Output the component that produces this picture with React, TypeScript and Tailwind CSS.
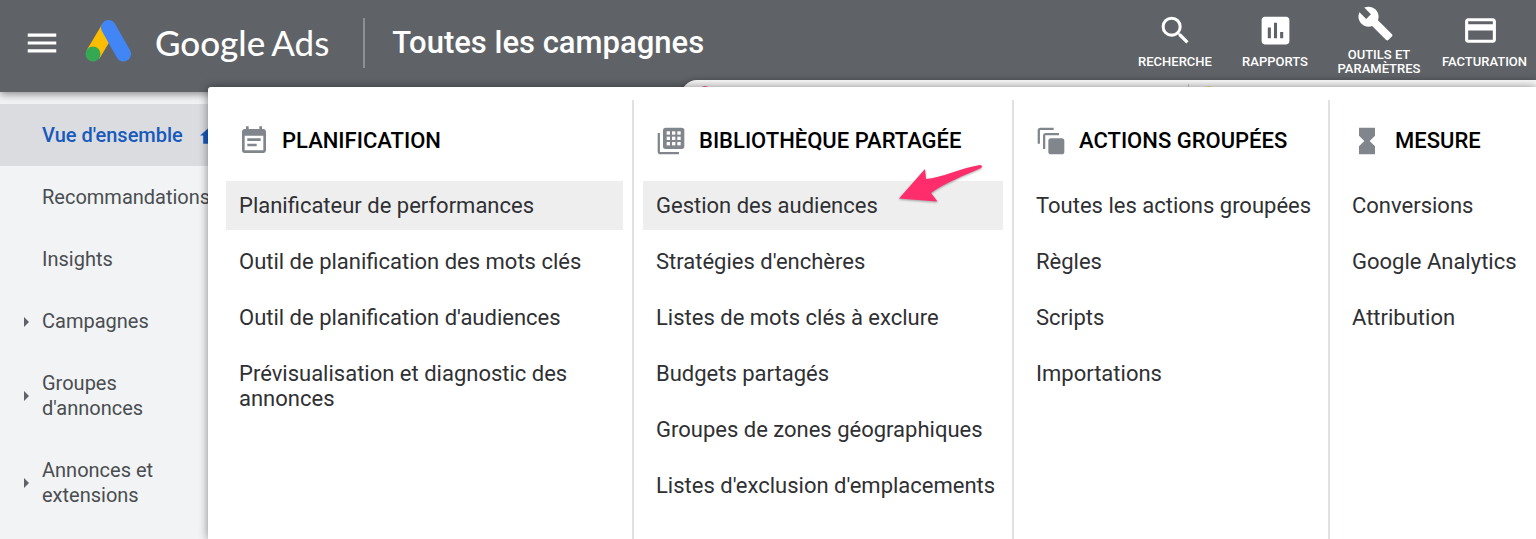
import { clsx } from "clsx";
import type { ReactNode } from "react";
import {
  MdAssessment,
  MdBuild,
  MdEventNote,
  MdHome,
  MdHourglassFull,
  MdMenu,
  MdOutlineCreditCard,
  MdSearch,
} from "react-icons/md";

type SideItem = {
  label: string;
  active?: boolean;
  expandable?: boolean;
};

type MenuItem = {
  label: string;
  highlighted?: boolean;
  pointed?: boolean;
};

type MenuColumn = {
  title: string;
  icon: ReactNode;
  items: MenuItem[];
};

const sideItems: SideItem[] = [
  { label: "Vue d'ensemble", active: true },
  { label: "Recommandations" },
  { label: "Insights" },
  { label: "Campagnes", expandable: true },
  { label: "Groupes d'annonces", expandable: true },
  { label: "Annonces et extensions", expandable: true },
];

const tools = [
  { label: "RECHERCHE", icon: <MdSearch size={37} />, width: "w-[100px]" },
  { label: "RAPPORTS", icon: <MdAssessment size={37} />, width: "w-[100px]" },
  {
    label: "OUTILS ET PARAMÈTRES",
    icon: <MdBuild size={37} className="mr-2" />,
    width: "w-[108px]",
  },
  {
    label: "FACTURATION",
    icon: <MdOutlineCreditCard size={37} className="mr-2" />,
    width: "w-[103px]",
  },
];

const columns: MenuColumn[] = [
  {
    title: "PLANIFICATION",
    icon: <MdEventNote size={32} />,
    items: [
      { label: "Planificateur de performances", highlighted: true },
      { label: "Outil de planification des mots clés" },
      { label: "Outil de planification d'audiences" },
      { label: "Prévisualisation et diagnostic des annonces" },
    ],
  },
  {
    title: "BIBLIOTHÈQUE PARTAGÉE",
    icon: <LibraryIcon />,
    items: [
      { label: "Gestion des audiences", highlighted: true, pointed: true },
      { label: "Stratégies d'enchères" },
      { label: "Listes de mots clés à exclure" },
      { label: "Budgets partagés" },
      { label: "Groupes de zones géographiques" },
      { label: "Listes d'exclusion d'emplacements" },
    ],
  },
  {
    title: "ACTIONS GROUPÉES",
    icon: <StackIcon />,
    items: [
      { label: "Toutes les actions groupées" },
      { label: "Règles" },
      { label: "Scripts" },
      { label: "Importations" },
    ],
  },
  {
    title: "MESURE",
    icon: <MdHourglassFull size={32} />,
    items: [
      { label: "Conversions" },
      { label: "Google Analytics" },
      { label: "Attribution" },
    ],
  },
];

// Offsets of the nine cells in the shared library icon
const cells = [8.75, 12.75, 16.75];

function LibraryIcon() {
  return (
    <svg width="32" height="32" viewBox="0 0 24 24" fill="currentColor" aria-hidden="true">
      <path d="M3.700 6H2v14c0 1.100.9 2 2 2h14v-1.700H3.700V6z" />
      <rect x="6" y="2" width="16" height="16" rx="2" />
      {cells.map((x) =>
        cells.map((y) => (
          <rect key={`${x}-${y}`} x={x} y={y - 4} width="2.500" height="2.500" fill="#fff" />
        )),
      )}
    </svg>
  );
}

function StackIcon() {
  return (
    <svg width="32" height="32" viewBox="0 0 24 24" fill="currentColor" aria-hidden="true">
      <path d="M2 14V4c0-1.100.9-2 2-2h10v1.700H3.700V14H2z" />
      <path d="M6 18V8c0-1.100.9-2 2-2h10v1.700H7.700V18H6z" />
      <rect x="10" y="10" width="12" height="12" rx="2" />
    </svg>
  );
}

function AdsLogo() {
  return (
    <svg width="46" height="46" viewBox="0 0 46 46" aria-hidden="true">
      <path d="M17 4.500 1.500 30.500l13 8L25 21z" fill="#fbbc04" />
      <path d="M23.500 7.500 38.500 34" stroke="#4285f4" strokeWidth="15" strokeLinecap="round" />
      <circle cx="8" cy="34" r="7.500" fill="#34a853" />
    </svg>
  );
}

function PointerArrow() {
  return (
    <svg
      className="absolute -top-4 left-64 drop-shadow-[0_1px_1px_rgba(0,0,0,0.35)]"
      width="84"
      height="38"
      viewBox="0 0 84 38"
      aria-hidden="true"
    >
      <path
        d="M0 33.500 26 4l1 10C42 13 62 3 81 0c2 0 2.500 2 1 3C66 10 46 18 32 28l6.500 8.500z"
        fill="#ff2d6b"
      />
    </svg>
  );
}

function Header() {
  return (
    <header className="relative z-10 flex h-[92px] items-start justify-between bg-[#5f6368] text-white shadow-[0_2px_8px_rgba(0,0,0,0.45)]">
      <div className="flex h-[85px] items-center pl-[23px]">
        <button type="button" aria-label="Menu principal">
          <MdMenu size={38} />
        </button>
        <a href="#accueil" className="ml-6 flex items-center gap-6">
          <AdsLogo />
          <span className="flex items-baseline gap-1.5 pb-0.5 font-['Lato',sans-serif] text-[35px] leading-[44px]">
            <span className="font-medium">Google</span>
            <span>Ads</span>
          </span>
        </a>
        <div className="ml-[34px] h-[50px] w-0.5 bg-[#8d9093]" />
        <h1 className="ml-[27px] text-[31px] leading-9 font-medium">Toutes les campagnes</h1>
      </div>

      <nav className="flex h-20">
        {tools.map((tool) => (
          <button
            key={tool.label}
            type="button"
            className={clsx("flex flex-col items-center justify-center gap-1.5", tool.width)}
          >
            {tool.icon}
            <span className="px-3 text-[13px] leading-[14px] font-medium">{tool.label}</span>
          </button>
        ))}
      </nav>
    </header>
  );
}

function Sidebar() {
  return (
    <aside className="w-[260px] shrink-0 pt-3">
      {sideItems.map((item) => (
        <a
          key={item.label}
          href="#"
          className={clsx(
            "flex items-center gap-[13px] pt-[19px] pr-9 pb-[18px] pl-6 text-[20px] leading-[25px]",
            item.active ? "bg-[#dadce0] font-medium text-[#185abc]" : "text-[#4a4d51]",
          )}
        >
          <span className="flex w-[5px] shrink-0">
            {item.expandable && (
              <svg width="5" height="10" viewBox="0 0 5 10" fill="#5f6368" aria-hidden="true">
                <path d="M0 0l5 5-5 5z" />
              </svg>
            )}
          </span>
          <span className={item.expandable ? "w-32" : "whitespace-nowrap"}>{item.label}</span>
          {item.active && <MdHome size={25} className="ml-0.5 shrink-0" />}
        </a>
      ))}
    </aside>
  );
}

// Top edge of the card that stays visible between the header and the menu
function CardEdge() {
  return (
    <div className="absolute top-20 right-0 left-[681px] z-10 flex h-10 rounded-tl-2xl bg-[#f8f8f8] pt-1 shadow-[0_0_6px_rgba(0,0,0,0.25)]">
      <div className="flex flex-1 pt-0.5 pl-[18px]">
        <span className="size-3 rounded-full bg-[#f06292]" />
      </div>
      <div className="flex w-[348px] border-l border-[#c4c7c9] pt-0.5 pl-3.5">
        <span className="size-3 rounded-full bg-[#fbd58e]" />
      </div>
    </div>
  );
}

function ToolsMenu() {
  return (
    <div className="absolute top-[87px] right-0 bottom-0 left-[208px] z-20 grid grid-cols-[426fr_380fr_316fr_206fr] rounded-tl-[3px] bg-white pt-[13px] shadow-[0_0_10px_rgba(0,0,0,0.45)]">
      {columns.map((column) => (
        <section
          key={column.title}
          className="border-r-2 border-[#e0e1e4] px-[9px] pt-[25px] first:pl-[18px] last:border-r-0"
        >
          <h2 className="mb-6 flex items-center gap-3 pl-3 text-[22px] leading-8 font-medium whitespace-nowrap text-black">
            <span className="text-[#80868b]">{column.icon}</span>
            {column.title}
          </h2>
          <ul className="flex flex-col gap-[7px]">
            {column.items.map((item) => (
              <li key={item.label} className="relative">
                <a
                  href="#"
                  className={clsx(
                    "block py-3 pl-[13px] text-[22px] leading-[25px] text-[#2f3033]",
                    item.highlighted && "bg-[#eeeeee]",
                  )}
                >
                  {item.label}
                </a>
                {item.pointed && <PointerArrow />}
              </li>
            ))}
          </ul>
        </section>
      ))}
    </div>
  );
}

export default function App() {
  return (
    <div className="relative min-h-screen overflow-hidden bg-[#f1f3f4] font-['Roboto',sans-serif]">
      <Header />
      <Sidebar />
      <CardEdge />
      <ToolsMenu />
    </div>
  );
}
